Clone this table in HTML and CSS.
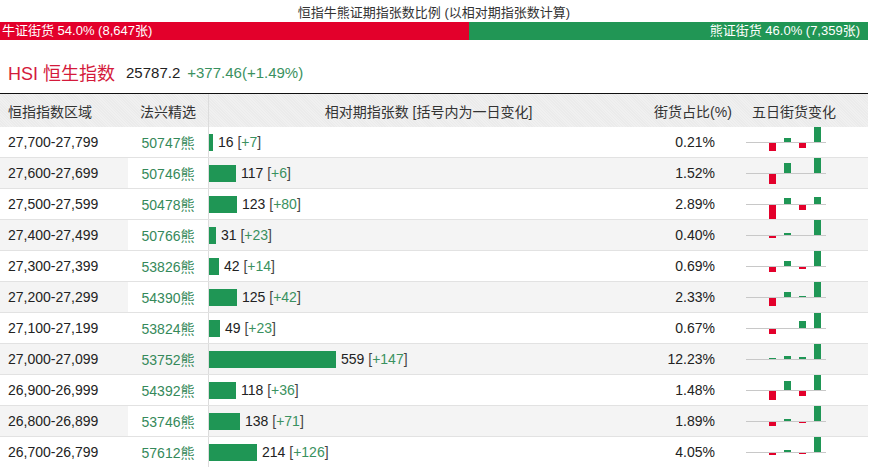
FILE: index.html
```html
<!DOCTYPE html>
<html lang="zh">
<head>
<meta charset="utf-8">
<title>恒指牛熊证期指张数比例</title>
<link rel="stylesheet" href="styles.css">
</head>
<body>
<div class="page">
  <div class="title">恒指牛熊证期指张数比例 (以相对期指张数计算)</div>
  <div class="ratio">
    <div class="bull" style="width:54%">牛证街货 54.0% (8,647张)</div>
    <div class="bear">熊证街货 46.0% (7,359张)</div>
  </div>
  <div class="index">
    <span class="idx-name">HSI 恒生指数</span>
    <span class="idx-val">25787.2</span>
    <span class="idx-chg">+377.46(+1.49%)</span>
  </div>
  <div class="table">
    <div class="row head">
      <div class="c1">恒指指数区域</div>
      <div class="c2">法兴精选</div>
      <div class="c3">相对期指张数 [括号内为一日变化]</div>
      <div class="c4">街货占比(%)</div>
      <div class="c5">五日街货变化</div>
    </div>

    <div class="row">
      <div class="c1">27,700-27,799</div>
      <div class="c2 code">50747熊</div>
      <div class="c3"><span class="bar" style="width:4px"></span><span class="num">16</span>&nbsp;<span class="br">[</span><span class="chg">+7</span><span class="br">]</span></div>
      <div class="c4">0.21%</div>
      <div class="c5"><svg class="spark" width="80" height="30" viewBox="0 0 80 30"><rect class="base" x="0" y="15" width="80" height="1"/><rect class="dn" x="23" y="16" width="7" height="8"/><rect class="up" x="38" y="11" width="7" height="4"/><rect class="dn" x="53" y="16" width="7" height="5"/><rect class="up" x="68" y="0" width="7" height="15"/></svg></div>
    </div>

    <div class="row alt">
      <div class="c1">27,600-27,699</div>
      <div class="c2 code">50746熊</div>
      <div class="c3"><span class="bar" style="width:27px"></span><span class="num">117</span>&nbsp;<span class="br">[</span><span class="chg">+6</span><span class="br">]</span></div>
      <div class="c4">1.52%</div>
      <div class="c5"><svg class="spark" width="80" height="30" viewBox="0 0 80 30"><rect class="base" x="0" y="15" width="80" height="1"/><rect class="dn" x="23" y="16" width="7" height="10"/><rect class="up" x="38" y="5" width="7" height="10"/><rect class="up" x="68" y="0" width="7" height="15"/></svg></div>
    </div>

    <div class="row">
      <div class="c1">27,500-27,599</div>
      <div class="c2 code">50478熊</div>
      <div class="c3"><span class="bar" style="width:28px"></span><span class="num">123</span>&nbsp;<span class="br">[</span><span class="chg">+80</span><span class="br">]</span></div>
      <div class="c4">2.89%</div>
      <div class="c5"><svg class="spark" width="80" height="30" viewBox="0 0 80 30"><rect class="base" x="0" y="15" width="80" height="1"/><rect class="dn" x="23" y="16" width="7" height="14"/><rect class="up" x="38" y="9" width="7" height="6"/><rect class="dn" x="53" y="16" width="7" height="5"/><rect class="up" x="68" y="8" width="7" height="7"/></svg></div>
    </div>

    <div class="row alt">
      <div class="c1">27,400-27,499</div>
      <div class="c2 code">50766熊</div>
      <div class="c3"><span class="bar" style="width:7px"></span><span class="num">31</span>&nbsp;<span class="br">[</span><span class="chg">+23</span><span class="br">]</span></div>
      <div class="c4">0.40%</div>
      <div class="c5"><svg class="spark" width="80" height="30" viewBox="0 0 80 30"><rect class="base" x="0" y="15" width="80" height="1"/><rect class="dn" x="23" y="16" width="7" height="2"/><rect class="up" x="38" y="13" width="7" height="2"/><rect class="up" x="68" y="0" width="7" height="15"/></svg></div>
    </div>

    <div class="row">
      <div class="c1">27,300-27,399</div>
      <div class="c2 code">53826熊</div>
      <div class="c3"><span class="bar" style="width:10px"></span><span class="num">42</span>&nbsp;<span class="br">[</span><span class="chg">+14</span><span class="br">]</span></div>
      <div class="c4">0.69%</div>
      <div class="c5"><svg class="spark" width="80" height="30" viewBox="0 0 80 30"><rect class="base" x="0" y="15" width="80" height="1"/><rect class="dn" x="23" y="16" width="7" height="5"/><rect class="up" x="38" y="10" width="7" height="5"/><rect class="dn" x="53" y="16" width="7" height="2"/><rect class="up" x="68" y="0" width="7" height="15"/></svg></div>
    </div>

    <div class="row alt">
      <div class="c1">27,200-27,299</div>
      <div class="c2 code">54390熊</div>
      <div class="c3"><span class="bar" style="width:28px"></span><span class="num">125</span>&nbsp;<span class="br">[</span><span class="chg">+42</span><span class="br">]</span></div>
      <div class="c4">2.33%</div>
      <div class="c5"><svg class="spark" width="80" height="30" viewBox="0 0 80 30"><rect class="base" x="0" y="15" width="80" height="1"/><rect class="dn" x="23" y="16" width="7" height="8"/><rect class="up" x="38" y="10" width="7" height="5"/><rect class="up" x="53" y="14" width="7" height="1"/><rect class="up" x="68" y="0" width="7" height="15"/></svg></div>
    </div>

    <div class="row">
      <div class="c1">27,100-27,199</div>
      <div class="c2 code">53824熊</div>
      <div class="c3"><span class="bar" style="width:11px"></span><span class="num">49</span>&nbsp;<span class="br">[</span><span class="chg">+23</span><span class="br">]</span></div>
      <div class="c4">0.67%</div>
      <div class="c5"><svg class="spark" width="80" height="30" viewBox="0 0 80 30"><rect class="base" x="0" y="15" width="80" height="1"/><rect class="dn" x="23" y="16" width="7" height="5"/><rect class="up" x="53" y="8" width="7" height="7"/><rect class="up" x="68" y="0" width="7" height="15"/></svg></div>
    </div>

    <div class="row alt hl">
      <div class="c1">27,000-27,099</div>
      <div class="c2 code">53752熊</div>
      <div class="c3"><span class="bar" style="width:127px"></span><span class="num">559</span>&nbsp;<span class="br">[</span><span class="chg">+147</span><span class="br">]</span></div>
      <div class="c4">12.23%</div>
      <div class="c5"><svg class="spark" width="80" height="30" viewBox="0 0 80 30"><rect class="base" x="0" y="15" width="80" height="1"/><rect class="up" x="23" y="14" width="7" height="1"/><rect class="up" x="38" y="12" width="7" height="3"/><rect class="up" x="53" y="13" width="7" height="2"/><rect class="up" x="68" y="0" width="7" height="15"/></svg></div>
    </div>

    <div class="row">
      <div class="c1">26,900-26,999</div>
      <div class="c2 code">54392熊</div>
      <div class="c3"><span class="bar" style="width:27px"></span><span class="num">118</span>&nbsp;<span class="br">[</span><span class="chg">+36</span><span class="br">]</span></div>
      <div class="c4">1.48%</div>
      <div class="c5"><svg class="spark" width="80" height="30" viewBox="0 0 80 30"><rect class="base" x="0" y="15" width="80" height="1"/><rect class="dn" x="23" y="16" width="7" height="9"/><rect class="up" x="38" y="6" width="7" height="9"/><rect class="dn" x="53" y="16" width="7" height="5"/><rect class="up" x="68" y="0" width="7" height="15"/></svg></div>
    </div>

    <div class="row alt">
      <div class="c1">26,800-26,899</div>
      <div class="c2 code">53746熊</div>
      <div class="c3"><span class="bar" style="width:31px"></span><span class="num">138</span>&nbsp;<span class="br">[</span><span class="chg">+71</span><span class="br">]</span></div>
      <div class="c4">1.89%</div>
      <div class="c5"><svg class="spark" width="80" height="30" viewBox="0 0 80 30"><rect class="base" x="0" y="15" width="80" height="1"/><rect class="dn" x="23" y="16" width="7" height="4"/><rect class="up" x="38" y="13" width="7" height="2"/><rect class="dn" x="53" y="16" width="7" height="1"/><rect class="up" x="68" y="0" width="7" height="15"/></svg></div>
    </div>

    <div class="row">
      <div class="c1">26,700-26,799</div>
      <div class="c2 code">57612熊</div>
      <div class="c3"><span class="bar" style="width:48px"></span><span class="num">214</span>&nbsp;<span class="br">[</span><span class="chg">+126</span><span class="br">]</span></div>
      <div class="c4">4.05%</div>
      <div class="c5"><svg class="spark" width="80" height="30" viewBox="0 0 80 30"><rect class="base" x="0" y="15" width="80" height="1"/><rect class="dn" x="23" y="16" width="7" height="2"/><rect class="up" x="38" y="13" width="7" height="2"/><rect class="dn" x="53" y="16" width="7" height="1"/><rect class="up" x="68" y="0" width="7" height="15"/></svg></div>
    </div>
  </div>
</div>
</body>
</html>
```

FILE: styles.css
```css
* { box-sizing: border-box; }
html, body { margin: 0; padding: 0; background: #fff; }
body {
  font-family: "Liberation Sans", Arial, "Noto Sans CJK SC", sans-serif;
  color: #222;
}
.page { width: 868px; }

.title {
  height: 22px;
  padding-top: 4px;
  font-size: 13px;
  line-height: 18px;
  color: #333;
  text-align: center;
}

.ratio {
  display: flex;
  height: 18px;
  font-size: 13px;
  line-height: 18px;
  color: #fff;
}
.bull { background: #e3002b; padding-left: 2px; white-space: nowrap; }
.bear { flex: 1; background: #219655; text-align: right; padding-right: 8px; white-space: nowrap; }

.index {
  height: 54px;
  padding: 11px 0 0 8px;
  border-bottom: 1px solid #111;
  display: flex;
  align-items: center;
  gap: 7px;
}
.idx-name { font-size: 18px; color: #d41a3b; margin-right: 4px; }
.idx-val { font-size: 15px; color: #222; }
.idx-chg { font-size: 15px; color: #3a9160; }

.table { font-size: 14px; }
.row {
  display: grid;
  grid-template-columns: 128px 81px 439px 90px 130px;
  height: 31px;
  border-bottom: 1px solid #e2e2e2;
}
.row > div { display: flex; align-items: center; white-space: nowrap; }
.row.alt { background: #f4f4f4; }

.c1 { padding-left: 8px; }
.c2 {
  justify-content: center;
  background: #fff;
  border-right: 1px solid #dcdcdc;
}
.row.hl .c2 { background: #f4f4f4; }
.code { color: #35895a; }
.c3 { padding-left: 0; }
.c4 { justify-content: flex-end; padding-right: 23px; }
.c5 { padding-left: 8px; align-items: flex-start !important; }

.row.head {
  height: 33px;
  border-bottom: none;
  color: #333;
  background: repeating-linear-gradient(45deg, #ebebeb 0 1px, #f0f0f0 1px 2px);
}
.row.head .c2 { background: transparent; }
.row.head .c3 { justify-content: center; }
.row.head .c4 { justify-content: center; padding-right: 0; }
.row.head .c5 { padding-left: 14px; align-items: center !important; }

.bar {
  display: inline-block;
  height: 17px;
  background: #1f9655;
  margin-right: 5px;
}
.num { color: #222; }
.br { color: #444; }
.chg { color: #3a9160; }

.spark { display: block; }
.spark .base { fill: #c8c8c8; }
.spark .up { fill: #1f9655; }
.spark .dn { fill: #e3002b; }
```
